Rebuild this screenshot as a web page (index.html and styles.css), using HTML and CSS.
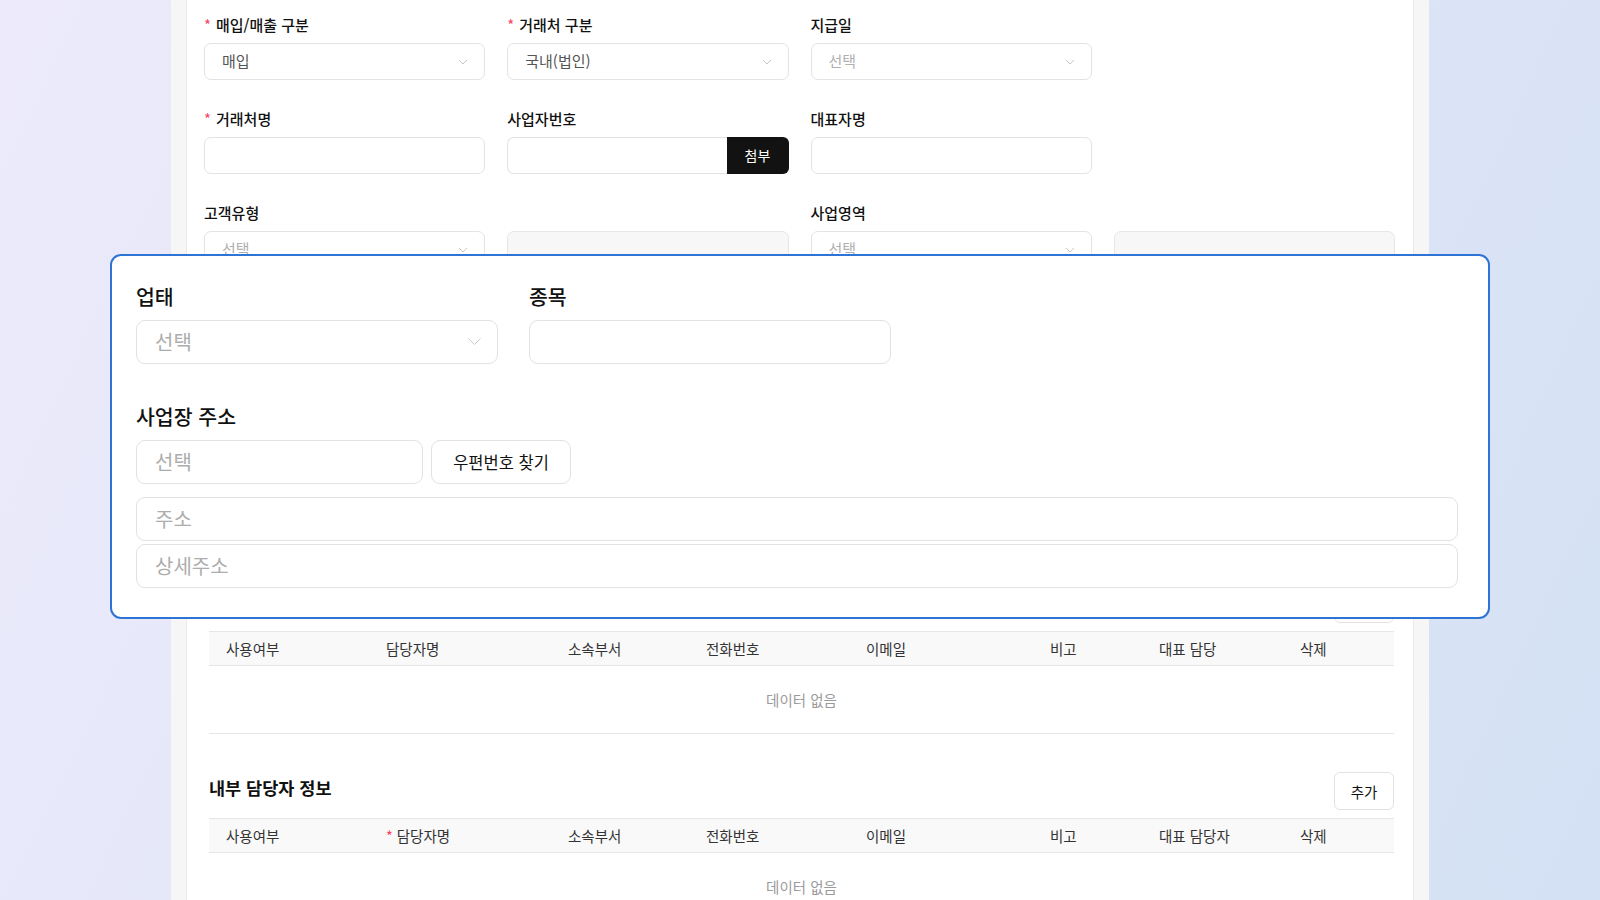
FILE: index.html
```html
<!DOCTYPE html>
<html lang="ko">
<head>
<meta charset="utf-8">
<title>거래처 등록</title>
<link rel="stylesheet" href="styles.css">
</head>
<body>
<div class="page">
  <main class="card">
    <div class="form">
      <div class="field">
        <label class="label req">매입/매출 구분</label>
        <div class="select"><span class="value">매입</span><svg class="chev" width="10" height="6" viewBox="0 0 10 6"><path d="M1 1L5 5L9 1"/></svg></div>
      </div>
      <div class="field">
        <label class="label req">거래처 구분</label>
        <div class="select"><span class="value">국내(법인)</span><svg class="chev" width="10" height="6" viewBox="0 0 10 6"><path d="M1 1L5 5L9 1"/></svg></div>
      </div>
      <div class="field">
        <label class="label">지급일</label>
        <div class="select"><span class="placeholder">선택</span><svg class="chev" width="10" height="6" viewBox="0 0 10 6"><path d="M1 1L5 5L9 1"/></svg></div>
      </div>
      <div class="field"></div>

      <div class="field">
        <label class="label req">거래처명</label>
        <input class="input" type="text">
      </div>
      <div class="field">
        <label class="label">사업자번호</label>
        <div class="input-group">
          <input class="input" type="text">
          <button class="attach" type="button">첨부</button>
        </div>
      </div>
      <div class="field">
        <label class="label">대표자명</label>
        <input class="input" type="text">
      </div>
      <div class="field"></div>

      <div class="field">
        <label class="label">고객유형</label>
        <div class="select"><span class="placeholder">선택</span><svg class="chev" width="10" height="6" viewBox="0 0 10 6"><path d="M1 1L5 5L9 1"/></svg></div>
      </div>
      <div class="field">
        <span class="label"></span>
        <input class="input" type="text" disabled>
      </div>
      <div class="field">
        <label class="label">사업영역</label>
        <div class="select"><span class="placeholder">선택</span><svg class="chev" width="10" height="6" viewBox="0 0 10 6"><path d="M1 1L5 5L9 1"/></svg></div>
      </div>
      <div class="field">
        <span class="label"></span>
        <input class="input" type="text" disabled>
      </div>
    </div>

    <section class="section">
      <div class="section-head">
        <span></span>
        <button class="btn-add" type="button">추가</button>
      </div>
      <div class="table">
        <div class="thead">
          <div class="th">사용여부</div>
          <div class="th">담당자명</div>
          <div class="th">소속부서</div>
          <div class="th">전화번호</div>
          <div class="th">이메일</div>
          <div class="th">비고</div>
          <div class="th">대표 담당</div>
          <div class="th">삭제</div>
        </div>
        <div class="empty">데이터 없음</div>
      </div>
    </section>

    <section class="section">
      <div class="section-head">
        <h2 class="section-title">내부 담당자 정보</h2>
        <button class="btn-add" type="button">추가</button>
      </div>
      <div class="table">
        <div class="thead">
          <div class="th">사용여부</div>
          <div class="th"><span class="star">*</span>담당자명</div>
          <div class="th">소속부서</div>
          <div class="th">전화번호</div>
          <div class="th">이메일</div>
          <div class="th">비고</div>
          <div class="th">대표 담당자</div>
          <div class="th">삭제</div>
        </div>
        <div class="empty">데이터 없음</div>
      </div>
    </section>
  </main>
</div>

<div class="magnifier">
  <div class="mg-row">
    <div class="mg-field">
      <div class="mg-label">업태</div>
      <div class="mg-select"><span class="mg-placeholder">선택</span><svg class="mg-chev" width="13" height="7" viewBox="0 0 13 7"><path d="M0.5 0.5L6.5 6.5L12.5 0.5"/></svg></div>
    </div>
    <div class="mg-field">
      <div class="mg-label">종목</div>
      <input class="mg-input" type="text">
    </div>
  </div>
  <div class="mg-address">
    <div class="mg-label">사업장 주소</div>
    <div class="mg-zip-row">
      <input class="mg-input mg-zip" type="text" placeholder="선택">
      <button class="mg-btn" type="button">우편번호 찾기</button>
    </div>
    <input class="mg-input mg-addr" type="text" placeholder="주소">
    <input class="mg-input mg-detail" type="text" placeholder="상세주소">
  </div>
</div>
</body>
</html>
```

FILE: styles.css
```css
* {
  box-sizing: border-box;
}

html, body {
  margin: 0;
  height: 100%;
}

body {
  position: relative;
  overflow: hidden;
  font-family: "Noto Sans CJK KR", "Noto Sans", sans-serif;
  color: #111;
  background: linear-gradient(115deg, #eceafb 0%, #e2e7f8 45%, #d4e1f4 100%);
}

input, button {
  font-family: inherit;
}

/* page frame */
.page {
  width: 1258px;
  min-height: 100vh;
  margin-left: 171px;
  padding: 0 15px;
  background: #f6f6f6;
}

.card {
  min-height: 100vh;
  padding: 15px 18px 40px 17px;
  background: #fff;
  border-left: 1px solid #ebebeb;
  border-right: 1px solid #ebebeb;
}

.form {
  display: grid;
  grid-template-columns: repeat(4, 1fr);
  column-gap: 22px;
  row-gap: 29px;
  margin-bottom: 317px;
}

.field {
  display: flex;
  flex-direction: column;
  min-width: 0;
}

.label {
  display: block;
  height: 20px;
  margin-bottom: 8px;
  font-size: 15px;
  line-height: 20px;
  font-weight: 500;
  color: #111;
  white-space: nowrap;
}

.label.req::before {
  content: "*";
  margin-right: 5px;
  color: #f5475f;
  font-weight: 400;
}

.select,
.input {
  display: flex;
  align-items: center;
  width: 100%;
  height: 37px;
  padding: 0 16px 2px 17px;
  border: 1px solid #e3e3e3;
  border-radius: 7px;
  background: #fff;
  font-size: 15px;
  color: #555;
  outline: none;
}

.select {
  justify-content: space-between;
}

.value {
  color: #555;
}

.placeholder {
  color: #b0b0b0;
}

.input:disabled {
  background: #f7f7f7;
  border-color: #e6e6e6;
}

.chev {
  margin-top: 2px;
}

.chev path {
  fill: none;
  stroke: #c6c6c6;
  stroke-width: 1;
}

.input-group {
  display: flex;
}

.input-group .input {
  border-right: none;
  border-radius: 7px 0 0 7px;
}

.attach {
  flex: 0 0 62px;
  height: 37px;
  padding-bottom: 2px;
  border: none;
  border-radius: 0 6px 6px 0;
  background: #121212;
  color: #fff;
  font-size: 14px;
}

/* contact sections */
.section {
  margin-top: 40px;
  padding: 0 1px 0 5px;
}

.section + .section {
  margin-top: 38px;
}

.section-head {
  display: flex;
  align-items: center;
  justify-content: space-between;
  height: 38px;
  margin-bottom: 8px;
}

.section-title {
  margin: 0 0 8px;
  font-size: 17.5px;
  font-weight: 700;
  color: #111;
}

.btn-add {
  width: 60px;
  height: 38px;
  border: 1px solid #e2e2e2;
  border-radius: 6px;
  background: #fff;
  font-size: 14.5px;
  color: #111;
}

.table {
  width: 100%;
}

.thead {
  display: grid;
  grid-template-columns: 160px 182px 138px 160px 184px 109px 141px 111px;
  height: 35px;
  background: #f9f9f9;
  border-top: 1px solid #e6e6e6;
  border-bottom: 1px solid #e6e6e6;
}

.th {
  padding: 0 17px;
  font-size: 14.5px;
  line-height: 33px;
  color: #333;
  white-space: nowrap;
}

.star {
  margin-right: 4px;
  color: #f5475f;
}

.empty {
  padding: 24px 0 23px;
  border-bottom: 1px solid #e6e6e6;
  font-size: 14.5px;
  line-height: 20px;
  text-align: center;
  color: #9a9a9a;
}

/* enlarged callout laid over the form */
.magnifier {
  position: absolute;
  left: 110px;
  top: 254px;
  width: 1380px;
  padding: 26px 30px 29px 24px;
  border: 2px solid #2e74d6;
  border-radius: 11px;
  background: #fff;
}

.mg-row {
  display: flex;
  gap: 31px;
}

.mg-field {
  width: 362px;
}

.mg-label {
  height: 28px;
  margin-bottom: 10px;
  font-size: 20.5px;
  line-height: 28px;
  font-weight: 500;
  color: #111;
  white-space: nowrap;
}

.mg-select,
.mg-input {
  display: flex;
  align-items: center;
  width: 100%;
  height: 44px;
  padding: 0 16px 1px 18px;
  border: 1px solid #e2e2e2;
  border-radius: 9px;
  background: #fff;
  font-size: 20px;
  color: #555;
  outline: none;
}

.mg-select {
  justify-content: space-between;
}

.mg-placeholder,
.mg-input::placeholder {
  color: #adadad;
}

.mg-chev path {
  fill: none;
  stroke: #cbcbcb;
  stroke-width: 1;
}

.mg-address {
  margin-top: 38px;
}

.mg-zip-row {
  display: flex;
  gap: 8px;
}

.mg-zip {
  width: 287px;
}

.mg-btn {
  width: 140px;
  height: 44px;
  border: 1px solid #e2e2e2;
  border-radius: 9px;
  background: #fff;
  font-size: 16.5px;
  color: #111;
}

.mg-addr {
  margin-top: 13px;
}

.mg-detail {
  margin-top: 3px;
}
```
